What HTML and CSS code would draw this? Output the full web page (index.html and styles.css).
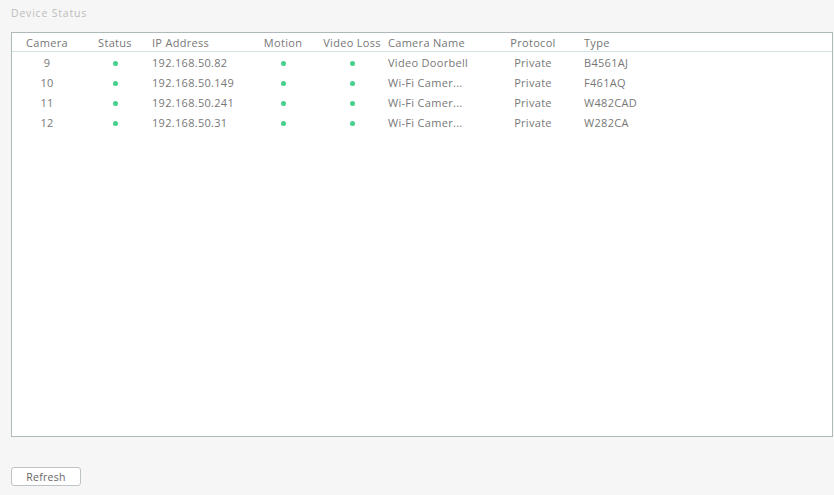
FILE: index.html
```html
<!DOCTYPE html>
<html lang="en">
<head>
    <meta charset="UTF-8">
    <title>Device Status</title>
    <link rel="stylesheet" href="styles.css">
</head>
<body>
    <div class="page-title">Device Status</div>
    <div class="status-box">
        <table class="status-table">
            <colgroup>
                <col class="c-cam">
                <col class="c-status">
                <col class="c-ip">
                <col class="c-motion">
                <col class="c-loss">
                <col class="c-name">
                <col class="c-proto">
                <col>
            </colgroup>
            <thead>
                <tr>
                    <th class="mid">Camera</th>
                    <th class="mid">Status</th>
                    <th class="left pad">IP Address</th>
                    <th class="mid">Motion</th>
                    <th class="mid">Video Loss</th>
                    <th class="left">Camera Name</th>
                    <th class="mid">Protocol</th>
                    <th class="left pad">Type</th>
                </tr>
            </thead>
            <tbody>
                <tr>
                    <td class="mid">9</td>
                    <td class="mid"><span class="dot"></span></td>
                    <td class="left pad">192.168.50.82</td>
                    <td class="mid"><span class="dot"></span></td>
                    <td class="mid"><span class="dot"></span></td>
                    <td class="left">Video Doorbell</td>
                    <td class="mid">Private</td>
                    <td class="left pad">B4561AJ</td>
                </tr>
                <tr>
                    <td class="mid">10</td>
                    <td class="mid"><span class="dot"></span></td>
                    <td class="left pad">192.168.50.149</td>
                    <td class="mid"><span class="dot"></span></td>
                    <td class="mid"><span class="dot"></span></td>
                    <td class="left">Wi-Fi Camer...</td>
                    <td class="mid">Private</td>
                    <td class="left pad">F461AQ</td>
                </tr>
                <tr>
                    <td class="mid">11</td>
                    <td class="mid"><span class="dot"></span></td>
                    <td class="left pad">192.168.50.241</td>
                    <td class="mid"><span class="dot"></span></td>
                    <td class="mid"><span class="dot"></span></td>
                    <td class="left">Wi-Fi Camer...</td>
                    <td class="mid">Private</td>
                    <td class="left pad">W482CAD</td>
                </tr>
                <tr>
                    <td class="mid">12</td>
                    <td class="mid"><span class="dot"></span></td>
                    <td class="left pad">192.168.50.31</td>
                    <td class="mid"><span class="dot"></span></td>
                    <td class="mid"><span class="dot"></span></td>
                    <td class="left">Wi-Fi Camer...</td>
                    <td class="mid">Private</td>
                    <td class="left pad">W282CA</td>
                </tr>
            </tbody>
        </table>
    </div>
    <div class="actions">
        <button class="btn">Refresh</button>
    </div>
</body>
</html>
```

FILE: styles.css
```css
body {
    margin: 0;
    padding: 0 1px 0 11px;
    background-color: #f6f6f6;
    font-family: 'Open Sans', 'Lato', sans-serif;
    color: #777;
}
.page-title {
    height: 32px;
    line-height: 26px;
    font-size: 10.5px;
    letter-spacing: 0.8px;
    color: #bdbdbd;
}
.status-box {
    height: 403px;
    border: 1px solid #aebaba;
    background: #fff;
}
.status-table {
    width: 100%;
    border-collapse: collapse;
    font-size: 11px;
    letter-spacing: 0.3px;
}
.c-cam { width: 70px; }
.c-status { width: 66px; }
.c-ip { width: 102px; }
.c-motion { width: 66px; }
.c-loss { width: 72px; }
.c-name { width: 98px; }
.c-proto { width: 94px; }
.status-table th {
    height: 18px;
    padding: 0;
    font-weight: normal;
    border-bottom: 1px solid #cfe3e3;
    white-space: nowrap;
}
.status-table td {
    height: 20px;
    padding: 0;
    white-space: nowrap;
}
.mid { text-align: center; }
.left { text-align: left; }
.pad { padding-left: 4px !important; }
.dot {
    display: inline-block;
    width: 5px;
    height: 5px;
    border-radius: 50%;
    background: #45d08c;
    vertical-align: middle;
}
.actions {
    padding-top: 30px;
}
.btn {
    display: block;
    width: 70px;
    height: 19px;
    padding: 0;
    border: 1px solid #bcc4c8;
    border-radius: 3px;
    background: #fff;
    font-family: inherit;
    font-size: 10.5px;
    letter-spacing: 0.3px;
    color: #666;
}
```
